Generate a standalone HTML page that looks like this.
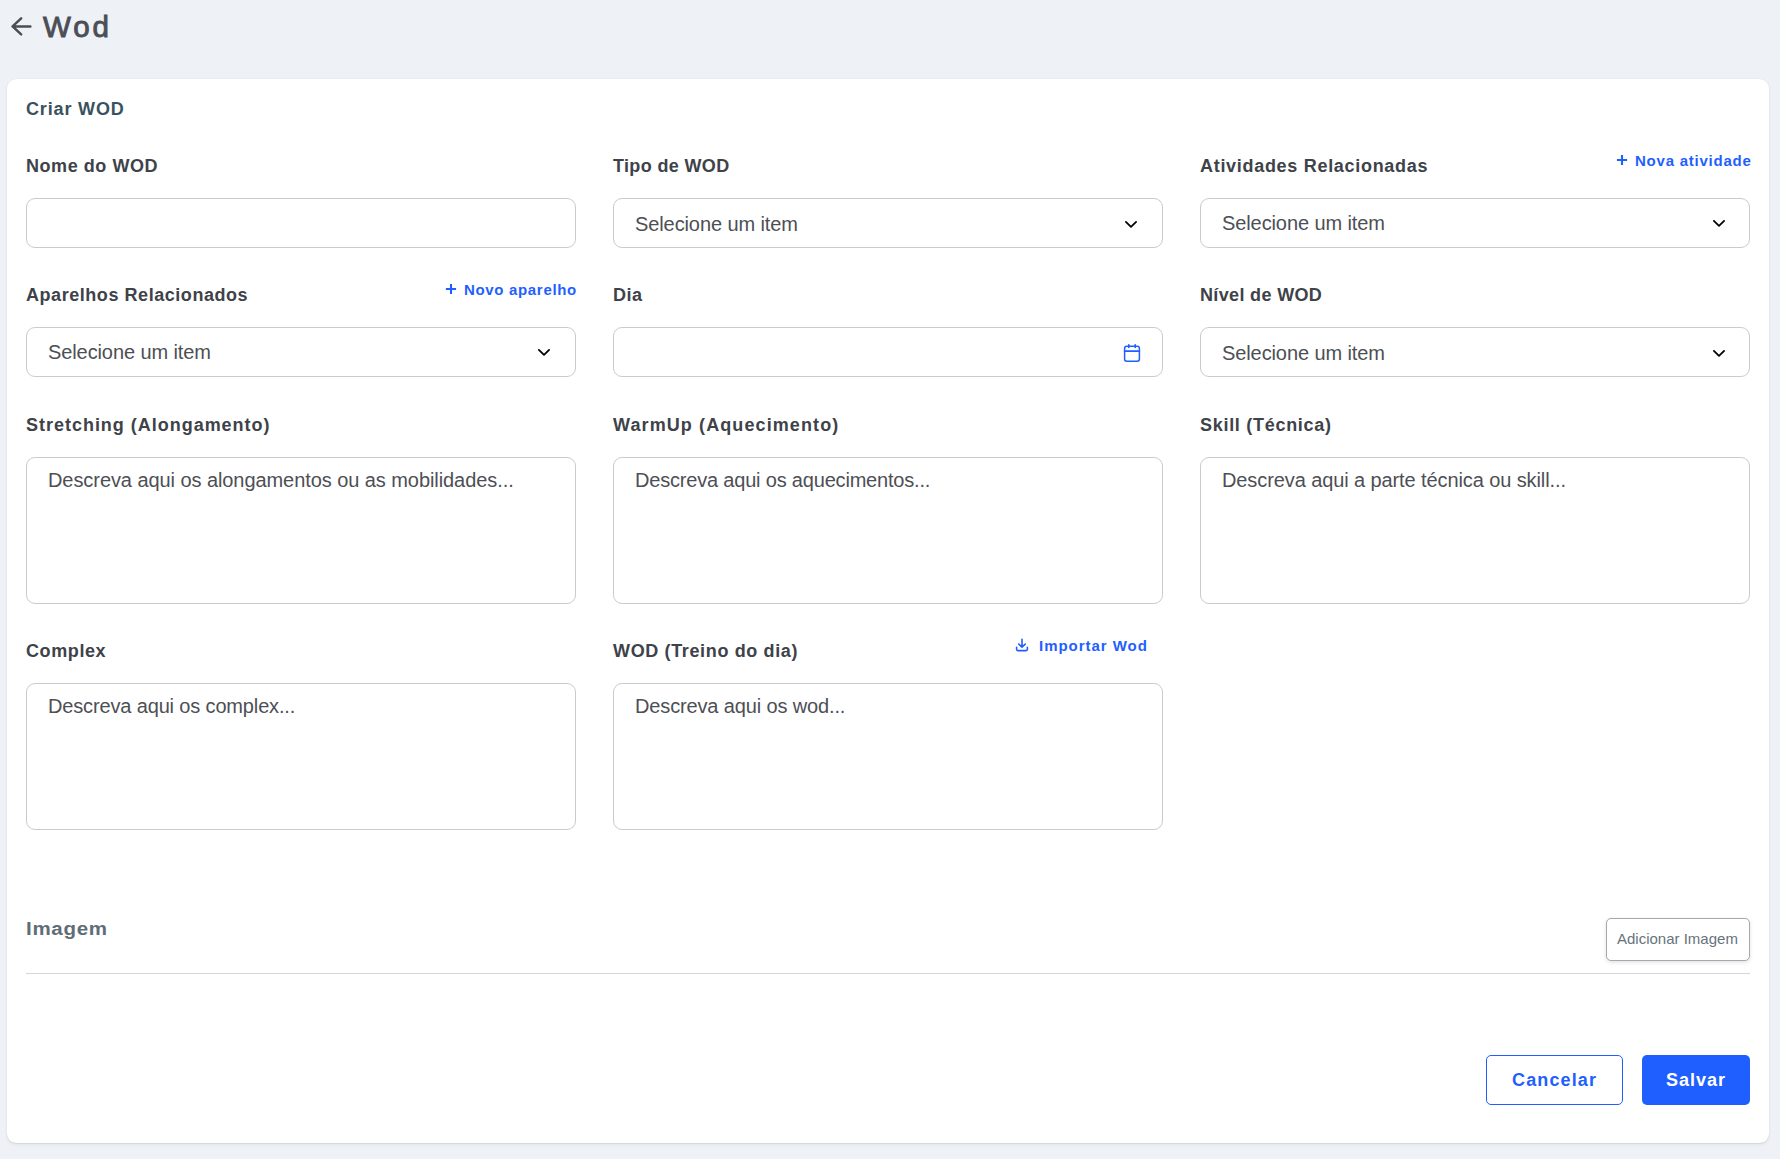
<!DOCTYPE html>
<html lang="pt">
<head>
<meta charset="utf-8">
<title>Wod</title>
<style>
*{box-sizing:border-box;margin:0;padding:0}
html,body{width:1780px;height:1159px;overflow:hidden}
body{background:#eef1f6;font-family:"Liberation Sans",sans-serif;position:relative}
.abs{position:absolute;white-space:nowrap;line-height:1}
.card{position:absolute;left:7px;top:79px;width:1762px;height:1064px;background:#fff;border-radius:9px;box-shadow:0 1px 1px rgba(20,40,40,.07),0 2px 4px rgba(20,30,40,.05),0 0 1px rgba(30,40,50,.12)}
.lbl{position:absolute;white-space:nowrap;line-height:1;font-weight:700;font-size:18px;color:#3e4249}
.link{position:absolute;white-space:nowrap;line-height:1;font-weight:700;font-size:15px;color:#1f5fff}
.inp{position:absolute;width:550px;height:50px;border:1px solid #c9cbd0;border-radius:9px;background:#fff}
.ta{position:absolute;width:550px;height:147px;border:1px solid #c9cbd0;border-radius:9px;background:#fff}
.ph{position:absolute;white-space:nowrap;line-height:1;font-size:20px;letter-spacing:-0.1px;color:#4d4f55}
</style>
</head>
<body>
<svg class="abs" style="left:0;top:0" width="40" height="45" viewBox="0 0 40 45"><path d="M21.15 18.45 L12.6 26.45 L21.15 34.45 M12.6 26.45 H30.35" fill="none" stroke="#4b4e54" stroke-width="2.5" stroke-linecap="round" stroke-linejoin="round"/></svg>
<div class="abs" style="left:43px;top:12px;font-size:29.5px;letter-spacing:2.9px;-webkit-text-stroke:0.9px #4b4e54;color:#4b4e54">Wod</div>

<div class="card"></div>

<div class="lbl" style="left:26px;top:100px;letter-spacing:0.84px;color:#3a515e">Criar WOD</div>

<!-- row 1 -->
<div class="lbl" style="left:26px;top:157px;letter-spacing:0.55px">Nome do WOD</div>
<div class="inp" style="left:26px;top:198px"></div>

<div class="lbl" style="left:613px;top:157px;letter-spacing:0.35px">Tipo de WOD</div>
<div class="inp" style="left:613px;top:198px"></div>
<div class="ph" style="left:635px;top:214px">Selecione um item</div>
<svg class="abs" style="left:1124px;top:220px" width="14" height="9" viewBox="0 0 14 9"><path d="M1.9 1.9L7 6.9 12.1 1.9" fill="none" stroke="#000" stroke-width="1.8" stroke-linecap="round" stroke-linejoin="round"/></svg>

<div class="lbl" style="left:1200px;top:157px;letter-spacing:0.7px">Atividades Relacionadas</div>
<svg class="abs" style="left:1615.6px;top:154px" width="12" height="12" viewBox="0 0 12 12"><path d="M6 .9V11.1M.9 6H11.1" stroke="#1f5fff" stroke-width="2.1"/></svg>
<div class="link" style="left:1635px;top:153px;letter-spacing:0.77px">Nova atividade</div>
<div class="inp" style="left:1200px;top:198px"></div>
<div class="ph" style="left:1222px;top:213px">Selecione um item</div>
<svg class="abs" style="left:1712px;top:219px" width="14" height="9" viewBox="0 0 14 9"><path d="M1.9 1.9L7 6.9 12.1 1.9" fill="none" stroke="#000" stroke-width="1.8" stroke-linecap="round" stroke-linejoin="round"/></svg>

<!-- row 2 -->
<div class="lbl" style="left:26px;top:286px;letter-spacing:0.55px">Aparelhos Relacionados</div>
<svg class="abs" style="left:445.2px;top:282.9px" width="12" height="12" viewBox="0 0 12 12"><path d="M6 .9V11.1M.9 6H11.1" stroke="#1f5fff" stroke-width="2.1"/></svg>
<div class="link" style="left:464px;top:282px;letter-spacing:0.67px">Novo aparelho</div>
<div class="inp" style="left:26px;top:327px"></div>
<div class="ph" style="left:48px;top:342px">Selecione um item</div>
<svg class="abs" style="left:537px;top:348px" width="14" height="9" viewBox="0 0 14 9"><path d="M1.9 1.9L7 6.9 12.1 1.9" fill="none" stroke="#000" stroke-width="1.8" stroke-linecap="round" stroke-linejoin="round"/></svg>

<div class="lbl" style="left:613px;top:286px;letter-spacing:0.5px">Dia</div>
<div class="inp" style="left:613px;top:327px"></div>
<svg class="abs" style="left:1122px;top:342px" width="19" height="22" viewBox="0 0 19 22"><rect x="2.6" y="4.2" width="14.8" height="15.0" rx="2.2" fill="none" stroke="#1f5fff" stroke-width="1.5"/><path d="M2.6 9.15H17.4M6.8 2.7V5.4M13.2 2.7V5.4" stroke="#1f5fff" stroke-width="1.6" stroke-linecap="round"/></svg>

<div class="lbl" style="left:1200px;top:286px;letter-spacing:0.35px">Nível de WOD</div>
<div class="inp" style="left:1200px;top:327px"></div>
<div class="ph" style="left:1222px;top:343px">Selecione um item</div>
<svg class="abs" style="left:1712px;top:349px" width="14" height="9" viewBox="0 0 14 9"><path d="M1.9 1.9L7 6.9 12.1 1.9" fill="none" stroke="#000" stroke-width="1.8" stroke-linecap="round" stroke-linejoin="round"/></svg>

<!-- row 3 -->
<div class="lbl" style="left:26px;top:416px;letter-spacing:0.98px">Stretching (Alongamento)</div>
<div class="ta" style="left:26px;top:457px"></div>
<div class="ph" style="left:48px;top:470px;letter-spacing:-0.07px">Descreva aqui os alongamentos ou as mobilidades...</div>

<div class="lbl" style="left:613px;top:416px;letter-spacing:1.1px">WarmUp (Aquecimento)</div>
<div class="ta" style="left:613px;top:457px"></div>
<div class="ph" style="left:635px;top:470px;letter-spacing:-0.19px">Descreva aqui os aquecimentos...</div>

<div class="lbl" style="left:1200px;top:416px;letter-spacing:0.71px">Skill (Técnica)</div>
<div class="ta" style="left:1200px;top:457px"></div>
<div class="ph" style="left:1222px;top:470px">Descreva aqui a parte técnica ou skill...</div>

<!-- row 4 -->
<div class="lbl" style="left:26px;top:642px;letter-spacing:0.6px">Complex</div>
<div class="ta" style="left:26px;top:683px"></div>
<div class="ph" style="left:48px;top:696px;letter-spacing:-0.15px">Descreva aqui os complex...</div>

<div class="lbl" style="left:613px;top:642px;letter-spacing:0.64px">WOD (Treino do dia)</div>
<svg class="abs" style="left:1014px;top:637px" width="16" height="16" viewBox="0 0 16 16"><path d="M8 2.3v7.6M4.8 7.1 8 10.1l3.2-3M2.6 10.2v2.1a1.3 1.3 0 0 0 1.3 1.3h8.2a1.3 1.3 0 0 0 1.3-1.3v-2.1" fill="none" stroke="#1f5fff" stroke-width="1.6" stroke-linecap="round" stroke-linejoin="round"/></svg>
<div class="link" style="left:1039px;top:638px;letter-spacing:0.97px">Importar Wod</div>
<div class="ta" style="left:613px;top:683px"></div>
<div class="ph" style="left:635px;top:696px;letter-spacing:-0.14px">Descreva aqui os wod...</div>

<!-- image -->
<div class="lbl" style="left:26px;top:920px;letter-spacing:0.6px;transform:scaleX(1.14);transform-origin:0 0;color:#5f6d76">Imagem</div>
<div class="abs" style="left:1606px;top:918px;width:144px;height:43px;border:1px solid #a2aaaf;border-radius:5px;background:#fff;box-shadow:0 2px 4px rgba(0,0,0,.09),0 0 3px rgba(0,0,0,.05)"></div>
<div class="abs" style="left:1617px;top:931px;font-size:15px;color:#66737c">Adicionar Imagem</div>
<div class="abs" style="left:26px;top:973px;width:1724px;height:1px;background:#d4d6d9"></div>

<!-- buttons -->
<div class="abs" style="left:1486px;top:1055px;width:137px;height:50px;border:1px solid #1f5fff;border-radius:5px"></div>
<div class="abs" style="left:1512px;top:1071px;letter-spacing:1.14px;font-size:18px;font-weight:700;color:#1f5fff">Cancelar</div>
<div class="abs" style="left:1642px;top:1055px;width:108px;height:50px;background:#1f5fff;border-radius:5px"></div>
<div class="abs" style="left:1666px;top:1071px;letter-spacing:1px;font-size:18px;font-weight:700;color:#fff">Salvar</div>
</body>
</html>
